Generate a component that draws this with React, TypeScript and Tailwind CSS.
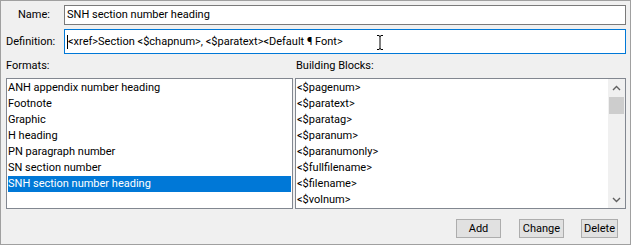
import React from "react"

const formats = [
  "ANH appendix number heading",
  "Footnote",
  "Graphic",
  "H heading",
  "PN paragraph number",
  "SN section number",
  "SNH section number heading",
]

const blocks = [
  "<$pagenum>",
  "<$paratext>",
  "<$paratag>",
  "<$paranum>",
  "<$paranumonly>",
  "<$fullfilename>",
  "<$filename>",
  "<$volnum>",
]

const selected = "SNH section number heading"

function Chevron({ up }: { up?: boolean }) {
  return (
    <svg width="9" height="6" viewBox="0 0 9 6">
      <path
        d={up ? "M1 5 L4.5 1.5 L8 5" : "M1 1 L4.5 4.5 L8 1"}
        fill="none"
        stroke="#606060"
        strokeWidth="1.4"
      />
    </svg>
  )
}

function Button({ label, width }: { label: string; width: string }) {
  return (
    <div className={`${width} h-[19px] border border-[#adadad] bg-[#e1e1e1] flex items-center justify-center`}>
      {label}
    </div>
  )
}

export default function App() {
  return (
    <div className="w-[632px] h-[247px] bg-white font-['Roboto',sans-serif] text-[11px] leading-[14px] text-black">
      <div className="w-[631px] h-[245px] border border-[#a0a0a0] bg-[#f0f0f0] flex flex-col">
        {/* Name */}
        <div className="flex items-center mt-[4px] h-[20px]">
          <span className="w-[63px] pl-[17px]">Name:</span>
          <div className="w-[562px] h-[20px] border border-[#7a7a7a] bg-white flex items-center pl-[2px]">
            SNH section number heading
          </div>
        </div>

        {/* Definition */}
        <div className="flex items-center mt-[4px] h-[25px]">
          <span className="w-[63px] pl-[5px]">Definition:</span>
          <div className="relative w-[562px] h-[25px] border border-[#0078d7] bg-white flex items-center pl-[2px] whitespace-pre">
            <span className="w-px h-[14px] bg-black" />
            <span>{"<xref>Section <$chapnum>, <$paratext><Default ¶ Font>"}</span>
            {/* mouse I-beam */}
            <svg className="absolute left-[311px] top-[5px]" width="8" height="15" viewBox="0 0 8 15">
              <path d="M1 0.5 H3 M5 0.5 H7 M3 0.5 Q4 1 4 2 V13 Q4 14 3 14.5 M5 0.5 Q4 1 4 2 M4 13 Q4 14 5 14.5 M1 14.5 H3 M5 14.5 H7" fill="none" stroke="#000" strokeWidth="1" />
            </svg>
          </div>
        </div>

        {/* Lists */}
        <div className="flex ml-[5px] gap-[2px]">
          <div className="w-[287px] flex flex-col">
            <div className="h-[24px] flex items-center">Formats:</div>
            <div className="h-[131px] border border-[#828790] bg-white p-[1px]">
              {formats.map((f) => (
                <div
                  key={f}
                  className={`h-[16px] leading-[16px] ${f === selected ? "bg-[#0078d7] text-white" : ""}`}
                >
                  {f}
                </div>
              ))}
            </div>
          </div>

          <div className="w-[331px] flex flex-col">
            <div className="h-[24px] flex items-center pl-[1px]">Building Blocks:</div>
            <div className="h-[131px] border border-[#828790] bg-white flex">
              <div className="flex-1 pt-[1px] pl-[1px] overflow-hidden">
                {blocks.map((b) => (
                  <div key={b} className="h-[16px] leading-[16px]">
                    {b}
                  </div>
                ))}
              </div>
              <div className="w-[17px] bg-[#f0f0f0] flex flex-col">
                <div className="h-[17px] flex items-center justify-center">
                  <Chevron up />
                </div>
                <div className="flex-1 pt-[1px]">
                  <div className="h-[17px] mx-[1px] bg-[#cdcdcd]" />
                </div>
                <div className="h-[17px] flex items-center justify-center">
                  <Chevron />
                </div>
              </div>
            </div>
          </div>
        </div>

        {/* Buttons */}
        <div className="flex justify-end mt-[10px] pr-[12px]">
          <Button label="Add" width="w-[45px]" />
          <div className="w-[18px]" />
          <Button label="Change" width="w-[45px]" />
          <div className="w-[17px]" />
          <Button label="Delete" width="w-[37px]" />
        </div>
      </div>
    </div>
  )
}
